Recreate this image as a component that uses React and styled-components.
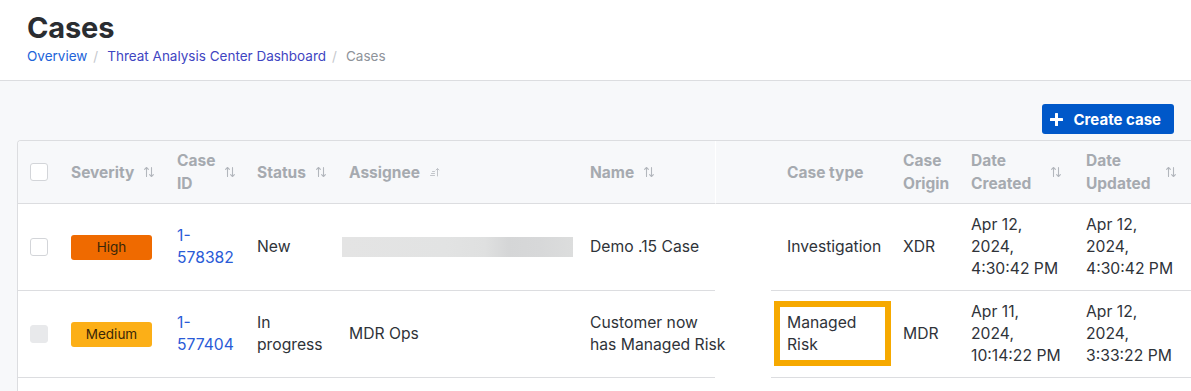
import React from "react";
import styled, { createGlobalStyle } from "styled-components";

const GlobalStyle = createGlobalStyle`
  html, body { margin: 0; padding: 0; overflow: hidden; }
  body { font-family: Inter, "Noto Sans", "Liberation Sans", sans-serif; background: #f7f8fa; color: #2f3339; }
  * { box-sizing: border-box; }
`;

const Page = styled.div`
  width: 1191px;
  height: 391px;
  overflow: hidden;
  display: flex;
  flex-direction: column;
`;

const TopBar = styled.header`
  flex: none;
  background: #fff;
  border-bottom: 1px solid #dcdde0;
  padding: 10px 27px 0;
  height: 81px;
`;

const Title = styled.h1`
  margin: 0;
  font-size: 29px;
  line-height: 36px;
  font-weight: 700;
  color: #2a2d31;
  letter-spacing: -0.15px;
`;

const Crumbs = styled.nav`
  display: flex;
  align-items: center;
  font-size: 13.5px;
  line-height: 20px;
`;

const Crumb = styled.a`
  color: ${(p) => p.$color};
  text-decoration: none;
`;

const Sep = styled.span`
  color: #c5c8cd;
  margin: 0 9px 0 6px;
`;

const Current = styled.span`
  color: #8e939a;
`;

const Content = styled.main`
  flex: none;
  padding: 23px 17px 0 17px;
  display: flex;
  flex-direction: column;
`;

const Actions = styled.div`
  display: flex;
  justify-content: flex-end;
  margin-bottom: 6px;
`;

const PrimaryButton = styled.button`
  display: flex;
  align-items: center;
  gap: 11px;
  height: 30px;
  padding: 0 13px 0 8px;
  border: none;
  border-radius: 3px;
  background: #0058c9;
  color: #fff;
  font-family: inherit;
  font-size: 15px;
  font-weight: 700;
  cursor: pointer;
`;

const TableFrame = styled.div`
  width: 1260px;
  border: 1px solid #dcdde0;
  border-right: none;
  border-bottom: none;
  border-radius: 4px 0 0 0;
  overflow: hidden;
  background: #fff;
`;

const Table = styled.table`
  width: 1260px;
  table-layout: fixed;
  border-collapse: separate;
  border-spacing: 0;
`;

const Col = styled.col`
  width: ${(p) => p.$w}px;
`;

const Th = styled.th`
  background: #f7f8fa;
  border-bottom: 1px solid #dcdde0;
  padding: 8px ${(p) => p.$pr ?? 12}px 8px ${(p) => p.$pl ?? 12}px;
  font-size: 15.5px;
  line-height: 23px;
  font-weight: 700;
  color: #a6aab0;
  text-align: left;
  vertical-align: middle;
  ${(p) => p.$gap && "border-left: 1px solid #fff;"}
`;

const HeadInner = styled.div`
  display: flex;
  align-items: center;
  gap: 9px;
  justify-content: ${(p) => (p.$spread ? "space-between" : "flex-start")};
`;

const Td = styled.td`
  position: relative;
  border-bottom: ${(p) => (p.$gap ? "none" : "1px solid #dcdde0")};
  padding: 10px ${(p) => p.$pr ?? 12}px 10px ${(p) => p.$pl ?? 12}px;
  font-size: 15.7px;
  line-height: 22px;
  color: #2f3339;
  vertical-align: middle;
  height: 87px;
`;

const Check = styled.span`
  display: block;
  width: 18px;
  height: 18px;
  border-radius: 3px;
  border: 1.5px solid ${(p) => (p.$disabled ? "#e8e9eb" : "#d3d5d9")};
  background: ${(p) => (p.$disabled ? "#e8e9eb" : "#fff")};
`;

const Badge = styled.span`
  display: flex;
  align-items: center;
  justify-content: center;
  width: 81px;
  height: 25px;
  border-radius: 3px;
  background: ${(p) => p.$bg};
  color: #3a2608;
  font-size: 13.5px;
`;

const IdLink = styled.a`
  color: #2a5bd7;
  text-decoration: none;
  display: inline-block;
  max-width: 60px;
`;

const Redacted = styled.div`
  height: 20px;
  margin-left: -7px;
  width: 231px;
  background: linear-gradient(90deg, #e4e4e4 0%, #e2e3e3 45%, #dfe0e0 62%, #d5d6d7 72%, #d7d8d9 86%, #dcdddd 100%);
`;

const Line = styled.span`
  display: block;
  white-space: nowrap;
`;

const Highlight = styled.div`
  position: absolute;
  left: 3px;
  top: 10px;
  width: 117px;
  height: 65px;
  border: 6px solid #f6a900;
  pointer-events: none;
`;

const SortIcon = () => (
  <svg width="12" height="12" viewBox="0 0 12 12" fill="none" stroke="#b3b7bd" strokeWidth="1.1" strokeLinecap="round" strokeLinejoin="round" style={{ flex: "none" }}>
    <path d="M3.5 10.5V1.5M1.6 3.4L3.5 1.5L5.4 3.4" />
    <path d="M8.5 1.5V10.5M6.6 8.6L8.5 10.5L10.4 8.6" />
  </svg>
);

const SortAscIcon = () => (
  <svg width="12" height="12" viewBox="0 0 12 12" fill="none" stroke="#c2c5ca" strokeWidth="1" strokeLinecap="round" strokeLinejoin="round" style={{ flex: "none" }}>
    <path d="M3.5 5.5H5.5M2.5 7.5H5.5M1.5 9.5H5.5" />
    <path d="M8.5 10V2.5M7 4L8.5 2.5L10 4" />
  </svg>
);

const PlusIcon = () => (
  <svg width="13" height="13" viewBox="0 0 13 13" fill="#fff">
    <rect x="5" y="0" width="3" height="13" rx="0.5" />
    <rect x="0" y="5" width="13" height="3" rx="0.5" />
  </svg>
);

const rows = [
  {
    sev: "High",
    sevBg: "#ef6a00",
    id: "1-578382",
    status: "New",
    assignee: null,
    name: ["Demo .15 Case"],
    type: "Investigation",
    origin: "XDR",
    created: ["Apr 12,", "2024,", "4:30:42 PM"],
    updated: ["Apr 12,", "2024,", "4:30:42 PM"],
  },
  {
    sev: "Medium",
    sevBg: "#fcaf17",
    id: "1-577404",
    status: "In progress",
    assignee: "MDR Ops",
    name: ["Customer now", "has Managed Risk"],
    type: "Managed Risk",
    highlight: true,
    origin: "MDR",
    created: ["Apr 11,", "2024,", "10:14:22 PM"],
    updated: ["Apr 12,", "2024,", "3:33:22 PM"],
    disabled: true,
  },
  {
    sev: "Low",
    sevBg: "#7fbf3f",
    id: "1-577120",
    status: "New",
    assignee: "MDR Ops",
    name: ["Suspicious login", "activity"],
    type: "Investigation",
    origin: "XDR",
    created: ["Apr 11,", "2024,", "9:02:10 AM"],
    updated: ["Apr 11,", "2024,", "9:40:51 AM"],
  },
];

const widths = [41, 106, 80, 92, 241, 137, 56, 120, 68, 115, 204];

export default function App() {
  return (
    <Page>
      <GlobalStyle />
      <TopBar>
        <Title>Cases</Title>
        <Crumbs>
          <Crumb href="#" $color="#2263d9">Overview</Crumb>
          <Sep>/</Sep>
          <Crumb href="#" $color="#3f45c2">Threat Analysis Center Dashboard</Crumb>
          <Sep>/</Sep>
          <Current>Cases</Current>
        </Crumbs>
      </TopBar>
      <Content>
        <Actions>
          <PrimaryButton>
            <PlusIcon />
            Create case
          </PrimaryButton>
        </Actions>
        <TableFrame>
          <Table>
            <colgroup>
              {widths.map((w, i) => (
                <Col key={i} $w={w} />
              ))}
            </colgroup>
            <thead>
              <tr>
                <Th>
                  <Check />
                </Th>
                <Th>
                  <HeadInner>Severity <SortIcon /></HeadInner>
                </Th>
                <Th>
                  <HeadInner>Case ID <SortIcon /></HeadInner>
                </Th>
                <Th>
                  <HeadInner>Status <SortIcon /></HeadInner>
                </Th>
                <Th>
                  <HeadInner>Assignee <SortAscIcon /></HeadInner>
                </Th>
                <Th>
                  <HeadInner>Name <SortIcon /></HeadInner>
                </Th>
                <Th $gap />
                <Th $pl={16}>Case type</Th>
                <Th>Case Origin</Th>
                <Th>
                  <HeadInner $spread>Date Created <SortIcon /></HeadInner>
                </Th>
                <Th $pr={101}>
                  <HeadInner $spread>Date Updated <SortIcon /></HeadInner>
                </Th>
              </tr>
            </thead>
            <tbody>
              {rows.map((r) => (
                <tr key={r.id}>
                  <Td>
                    <Check $disabled={r.disabled} />
                  </Td>
                  <Td>
                    <Badge $bg={r.sevBg}>{r.sev}</Badge>
                  </Td>
                  <Td $pr={8}>
                    <IdLink href="#">{r.id}</IdLink>
                  </Td>
                  <Td>{r.status}</Td>
                  <Td>{r.assignee ? r.assignee : <Redacted />}</Td>
                  <Td $pr={0}>
                    {r.name.map((l) => (
                      <Line key={l}>{l}</Line>
                    ))}
                  </Td>
                  <Td $gap />
                  <Td $pl={16}>
                    {r.type}
                    {r.highlight && <Highlight />}
                  </Td>
                  <Td>{r.origin}</Td>
                  <Td>
                    {r.created.map((l) => (
                      <Line key={l}>{l}</Line>
                    ))}
                  </Td>
                  <Td>
                    {r.updated.map((l) => (
                      <Line key={l}>{l}</Line>
                    ))}
                  </Td>
                </tr>
              ))}
            </tbody>
          </Table>
        </TableFrame>
      </Content>
    </Page>
  );
}
